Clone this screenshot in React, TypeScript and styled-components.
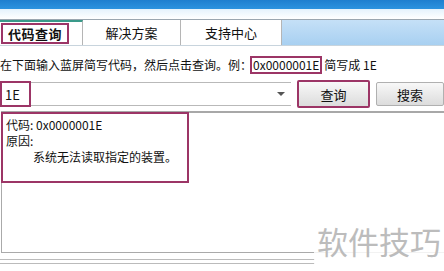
import React from "react";
import styled, { createGlobalStyle } from "styled-components";

const Global = createGlobalStyle`
  html, body { margin: 0; padding: 0; background: #fff; }
  body { width: 444px; height: 271px; overflow: hidden; font-family: "Noto Sans CJK SC", "Noto Sans", sans-serif; font-size: 12px; color: #111; }
`;

const Page = styled.div`
  position: relative;
  width: 444px;
  height: 271px;
  display: flex;
  flex-direction: column;
  overflow: hidden;
`;

const TitleBar = styled.div`
  height: 9px;
  background: linear-gradient(#1f7fcf, #2c93df);
`;

const Strip = styled.div`
  height: 10px;
  background: linear-gradient(#e4f2fc, #ffffff);
`;

const TabRow = styled.div`
  height: 27px;
  display: flex;
  border-top: 1px solid #9aa6b0;
  border-bottom: 1px solid #c8d4dd;
  background: linear-gradient(#c5e0f7, #a8d0f1);
  box-sizing: border-box;
`;

const Tab = styled.div<{ $w: number; $active?: boolean }>`
  width: ${(p) => p.$w}px;
  box-sizing: border-box;
  display: flex;
  align-items: center;
  justify-content: ${(p) => (p.$active ? "flex-start" : "center")};
  background: #fff;
  border-right: 1px solid #b5b5b5;
  border-top: ${(p) => (p.$active ? "2px solid #3a9a8a" : "none")};
  font-size: 13px;
  font-weight: ${(p) => (p.$active ? 700 : 400)};
  color: #111;
`;

const Mark = styled.span<{ $pad?: string }>`
  display: inline-flex;
  align-items: center;
  border: 2px solid #9c3566;
  padding: ${(p) => p.$pad || "0 2px"};
  box-sizing: border-box;
`;

const ActiveMark = styled(Mark)`
  height: 21px;
  margin-left: 1px;
  padding: 0 5px;
  letter-spacing: 0.5px;
`;

const Hint = styled.div`
  height: 34px;
  display: flex;
  align-items: center;
  padding-top: 3px;
  box-sizing: border-box;
  white-space: nowrap;
  font-size: 12px;
`;

const HintMark = styled(Mark)`
  height: 18px;
  padding: 0 1px;
  margin: 0 2px 0 -2px;
`;

const QueryRow = styled.div`
  height: 28px;
  display: flex;
  align-items: center;
  gap: 6px;
`;

const Combo = styled.div`
  width: 291px;
  height: 24px;
  box-sizing: border-box;
  border-top: 1px solid #b9b9b9;
  border-bottom: 1px solid #b9b9b9;
  display: flex;
  align-items: center;
  justify-content: space-between;
  padding-right: 6px;
`;

const InputMark = styled(Mark)`
  height: 26px;
  width: 31px;
  padding-left: 3px;
  font-size: 13px;
`;

const Arrow = styled.div`
  width: 0;
  height: 0;
  border-left: 4px solid transparent;
  border-right: 4px solid transparent;
  border-top: 4px solid #555;
`;

const Button = styled.div<{ $marked?: boolean }>`
  width: ${(p) => (p.$marked ? 73 : 68)}px;
  height: ${(p) => (p.$marked ? 28 : 24)}px;
  box-sizing: border-box;
  display: flex;
  align-items: center;
  justify-content: center;
  font-size: 13px;
  background: linear-gradient(#f8f8f8, #dcdcdc);
  border: ${(p) => (p.$marked ? "2px solid #9c3566" : "1px solid #b0b0b0")};
  border-radius: 2px;
`;

const Result = styled.div`
  margin-top: 3px;
  height: 142px;
  box-sizing: border-box;
  border-top: 2px solid #a8a8a8;
  border-left: 1px solid #aaa;
  border-bottom: 1px solid #aaa;
  margin-left: 1px;
`;

const ResultMark = styled.div`
  width: 188px;
  height: 71px;
  margin-left: -1px;
  margin-top: -1px;
  border: 2px solid #9c3566;
  box-sizing: border-box;
  padding: 3px 0 0 3px;
  font-size: 12px;
  line-height: 16px;
`;

const Line = styled.div<{ $indent?: number }>`
  padding-left: ${(p) => p.$indent || 0}px;
`;

const Footer = styled.div`
  margin-top: 6px;
  height: 3px;
  border-top: 1px solid #bbb;
  border-bottom: 1px solid #bbb;
  width: 315px;
`;

const Watermark = styled.div`
  position: absolute;
  right: 0;
  top: 216px;
  width: 130px;
  height: 48px;
  background: rgba(255,255,255,0.85);
  color: #bcbcbc;
  font-size: 31px;
  display: flex;
  align-items: center;
  justify-content: center;
`;

export default function App() {
  return (
    <Page>
      <Global />
      <TitleBar />
      <Strip />
      <TabRow>
        <Tab $w={83} $active>
          <ActiveMark>代码查询</ActiveMark>
        </Tab>
        <Tab $w={98}>解决方案</Tab>
        <Tab $w={101}>支持中心</Tab>
      </TabRow>
      <Hint>
        在下面输入蓝屏简写代码，然后点击查询。例：<HintMark>0x0000001E</HintMark>简写成 1E
      </Hint>
      <QueryRow>
        <Combo>
          <InputMark>1E</InputMark>
          <Arrow />
        </Combo>
        <Button $marked>查询</Button>
        <Button>搜索</Button>
      </QueryRow>
      <Result>
        <ResultMark>
          <Line>代码: 0x0000001E</Line>
          <Line>原因:</Line>
          <Line $indent={27}>系统无法读取指定的装置。</Line>
        </ResultMark>
      </Result>
      <Footer />
      <Watermark>软件技巧</Watermark>
    </Page>
  );
}
